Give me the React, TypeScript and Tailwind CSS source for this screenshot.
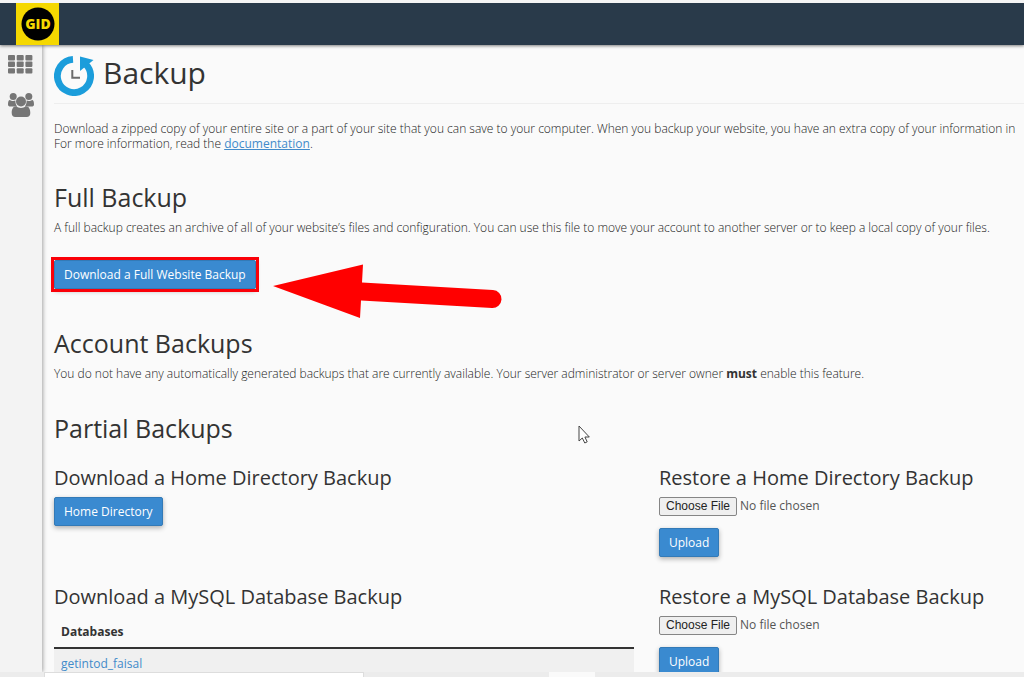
import type { ReactNode } from 'react'

function GridIcon() {
  return (
    <svg viewBox="0 0 25 19" className="h-[19px] w-[25px] fill-[#767676]" aria-hidden="true">
      {[0, 6.600, 13.200].map((y) =>
        [0, 8.700, 17.400].map((x) => <rect key={`${x}-${y}`} x={x} y={y} width="7" height="5.400" rx="1" />)
      )}
    </svg>
  )
}

function UsersIcon() {
  return (
    <svg viewBox="0 0 26 24" className="h-[24px] w-[26px] fill-[#767676]" aria-hidden="true">
      <circle cx="5.200" cy="3.500" r="3.500" />
      <circle cx="20.800" cy="3.500" r="3.500" />
      <path d="M0 11.500C0 9 .5 7 2 7c.8.7 2 1 3.200 1 .8 0 1.500-.2 2.200-.4-.1 2.400.5 4.300 1.800 5.900H2.500C1 13.500 0 13 0 11.500Z" />
      <path d="M26 11.500C26 9 25.500 7 24 7c-.8.7-2 1-3.200 1-.8 0-1.500-.2-2.200-.4.1 2.400-.5 4.300-1.800 5.900h6.700c1.500 0 2.500-.5 2.500-2Z" />
      <circle cx="13" cy="8.500" r="5" />
      <path d="M3.700 20c0-4 1.300-6.800 4.600-6.800 1.300 1.100 2.900 1.700 4.700 1.700s3.400-.6 4.700-1.700c3.300 0 4.600 2.800 4.600 6.800 0 2.700-1.400 4-3.500 4H7.200c-2.100 0-3.500-1.300-3.500-4Z" />
    </svg>
  )
}

function BackupIcon() {
  return (
    <svg viewBox="0 0 40 41" className="h-[41px] w-[40px]" aria-hidden="true">
      <path d="M19 4.400A16.600 16.600 0 1 0 32 9.500" fill="none" stroke="#1b9ddb" strokeWidth="6.800" />
      <path d="M26 1.500 39.500 5 26 16Z" fill="#1b9ddb" />
      <path d="M18.300 15v7.700H26" fill="none" stroke="#6b6b6b" strokeWidth="2" />
    </svg>
  )
}

function Logo() {
  return (
    <a href="#home" aria-label="GID" className="flex h-[42px] w-[43px] items-center justify-center bg-[#f5d800]">
      <svg viewBox="0 0 34 34" className="size-[34px]">
        <circle cx="17" cy="17" r="16.500" fill="#000" />
        <text
          x="17"
          y="22"
          textAnchor="middle"
          fill="#f5d800"
          className="font-['Open_Sans',sans-serif] text-[14px] font-extrabold"
        >
          GID
        </text>
      </svg>
    </a>
  )
}

function Button({ children }: { children: ReactNode }) {
  return (
    <button
      type="button"
      className="block h-[29px] rounded-xs border border-[#337ab7] bg-[#3a8ad0] px-[9px] text-[12px] leading-[15px] text-white shadow-[0_2px_5px_rgba(0,0,0,0.3)]"
    >
      {children}
    </button>
  )
}

function SectionTitle({ children }: { children: ReactNode }) {
  return <h2 className="text-[25px] leading-[30px]">{children}</h2>
}

function SubTitle({ children }: { children: ReactNode }) {
  return <h3 className="mb-[7px] text-[20px] leading-[24px] whitespace-nowrap">{children}</h3>
}

function RestoreForm({ title, id }: { title: string; id: string }) {
  return (
    <form>
      <SubTitle>
        <label htmlFor={id}>{title}</label>
      </SubTitle>
      <input
        id={id}
        type="file"
        className="mb-3 block h-[19px] w-full text-[12px] leading-[17px] text-[#555] file:mr-[3px] file:h-[19px] file:rounded-xs file:border file:border-solid file:border-[#858585] file:bg-[#efefef] file:px-[6px] file:font-['Liberation_Sans',Arial,sans-serif] file:text-[12px] file:leading-[17px] file:text-[#222]"
      />
      <Button>Upload</Button>
    </form>
  )
}

export default function App() {
  return (
    <div className="relative flex h-screen flex-col overflow-hidden bg-[#fafafa] font-['Open_Sans',sans-serif] text-[12px] leading-[15px] text-[#333]">
      <header className="z-10 border-t-3 border-[#f4f4f4] bg-[#293a4a] pl-4 shadow-[0_1px_3px_rgba(0,0,0,0.5)]">
        <Logo />
      </header>

      <div className="flex min-h-0 flex-1">
        <nav className="flex w-[42px] shrink-0 flex-col gap-[19px] bg-[#f3f3f3] pt-[10px] pl-2 shadow-[1px_0_4px_rgba(0,0,0,0.35)]">
          <a href="#apps" aria-label="Home">
            <GridIcon />
          </a>
          <a href="#users" aria-label="User manager">
            <UsersIcon />
          </a>
        </nav>

        <main className="min-w-0 flex-1 overflow-hidden pt-[10px] pl-3">
          <div className="flex gap-[9px] border-b border-[#eee] pb-[7px]">
            <BackupIcon />
            <h1 className="text-[30px] leading-[36px]">Backup</h1>
          </div>

          <p className="mt-[17px] font-light whitespace-nowrap text-[#222]">
            Download a zipped copy of your entire site or a part of your site that you can save to your computer. When
            you backup your website, you have an extra copy of your information in
            <br />
            For more information, read the{' '}
            <a href="#documentation" className="font-normal text-[#428bca] underline">
              documentation
            </a>
            .
          </p>

          <section className="mt-[31px]">
            <SectionTitle>Full Backup</SectionTitle>
            <p className="mt-2 font-light whitespace-nowrap text-[#222]">
              A full backup creates an archive of all of your website’s files and configuration. You can use this file
              to move your account to another server or to keep a local copy of your files.
            </p>
            <div className="relative mt-[25px] w-fit">
              <Button>Download a Full Website Backup</Button>
              <span className="absolute -inset-[3px] border-3 border-[#fa0008]" />
              <svg viewBox="0 0 230 56" className="absolute top-1 left-[219px] h-[56px] w-[230px]" aria-hidden="true">
                <path
                  d="M0 22 90 0.500 89 18.500 220 26a9 9 0 0 1-1 18L88 36.500 87 54Z"
                  fill="#f00"
                />
              </svg>
            </div>
          </section>

          <section className="mt-[39px]">
            <SectionTitle>Account Backups</SectionTitle>
            <p className="mt-2 font-light whitespace-nowrap text-[#222]">
              You do not have any automatically generated backups that are currently available. Your server
              administrator or server owner <strong className="font-bold text-[#333]">must</strong> enable this feature.
            </p>
          </section>

          <section className="mt-8">
            <SectionTitle>Partial Backups</SectionTitle>
            <div className="mt-[23px] grid grid-cols-[580fr_365fr] gap-x-[25px] gap-y-7">
              <div>
                <SubTitle>Download a Home Directory Backup</SubTitle>
                <Button>Home Directory</Button>
              </div>
              <RestoreForm title="Restore a Home Directory Backup" id="restore-home" />
              <div>
                <SubTitle>Download a MySQL Database Backup</SubTitle>
                <table className="w-full text-left">
                  <thead>
                    <tr className="border-b-2 border-[#333]">
                      <th className="px-[7px] pt-2 pb-2 font-bold">Databases</th>
                    </tr>
                  </thead>
                  <tbody>
                    <tr className="bg-[#f0f0f0]">
                      <td className="px-[7px] py-[7px]">
                        <a href="#getintod_faisal" className="text-[#428bca]">
                          getintod_faisal
                        </a>
                      </td>
                    </tr>
                  </tbody>
                </table>
              </div>
              <RestoreForm title="Restore a MySQL Database Backup" id="restore-mysql" />
            </div>
          </section>
        </main>
      </div>

      {/* status strip along the bottom edge */}
      <footer className="z-10 flex h-[5px] shrink-0 bg-[#ececec] pl-11">
        <div className="w-80 border border-b-0 border-[#ddd] bg-white" />
        <div className="ml-[185px] w-[46px] bg-[#fafafa]" />
      </footer>

      {/* mouse pointer */}
      <svg viewBox="0 0 12 19" className="absolute top-[425px] left-[578px] h-[19px] w-[12px]" aria-hidden="true">
        <path
          d="M1 1v15l3.300-3 2.500 5 2.400-1.200L6.900 12H11.300Z"
          fill="#fff"
          stroke="#444"
          strokeWidth="1"
        />
      </svg>
    </div>
  )
}
